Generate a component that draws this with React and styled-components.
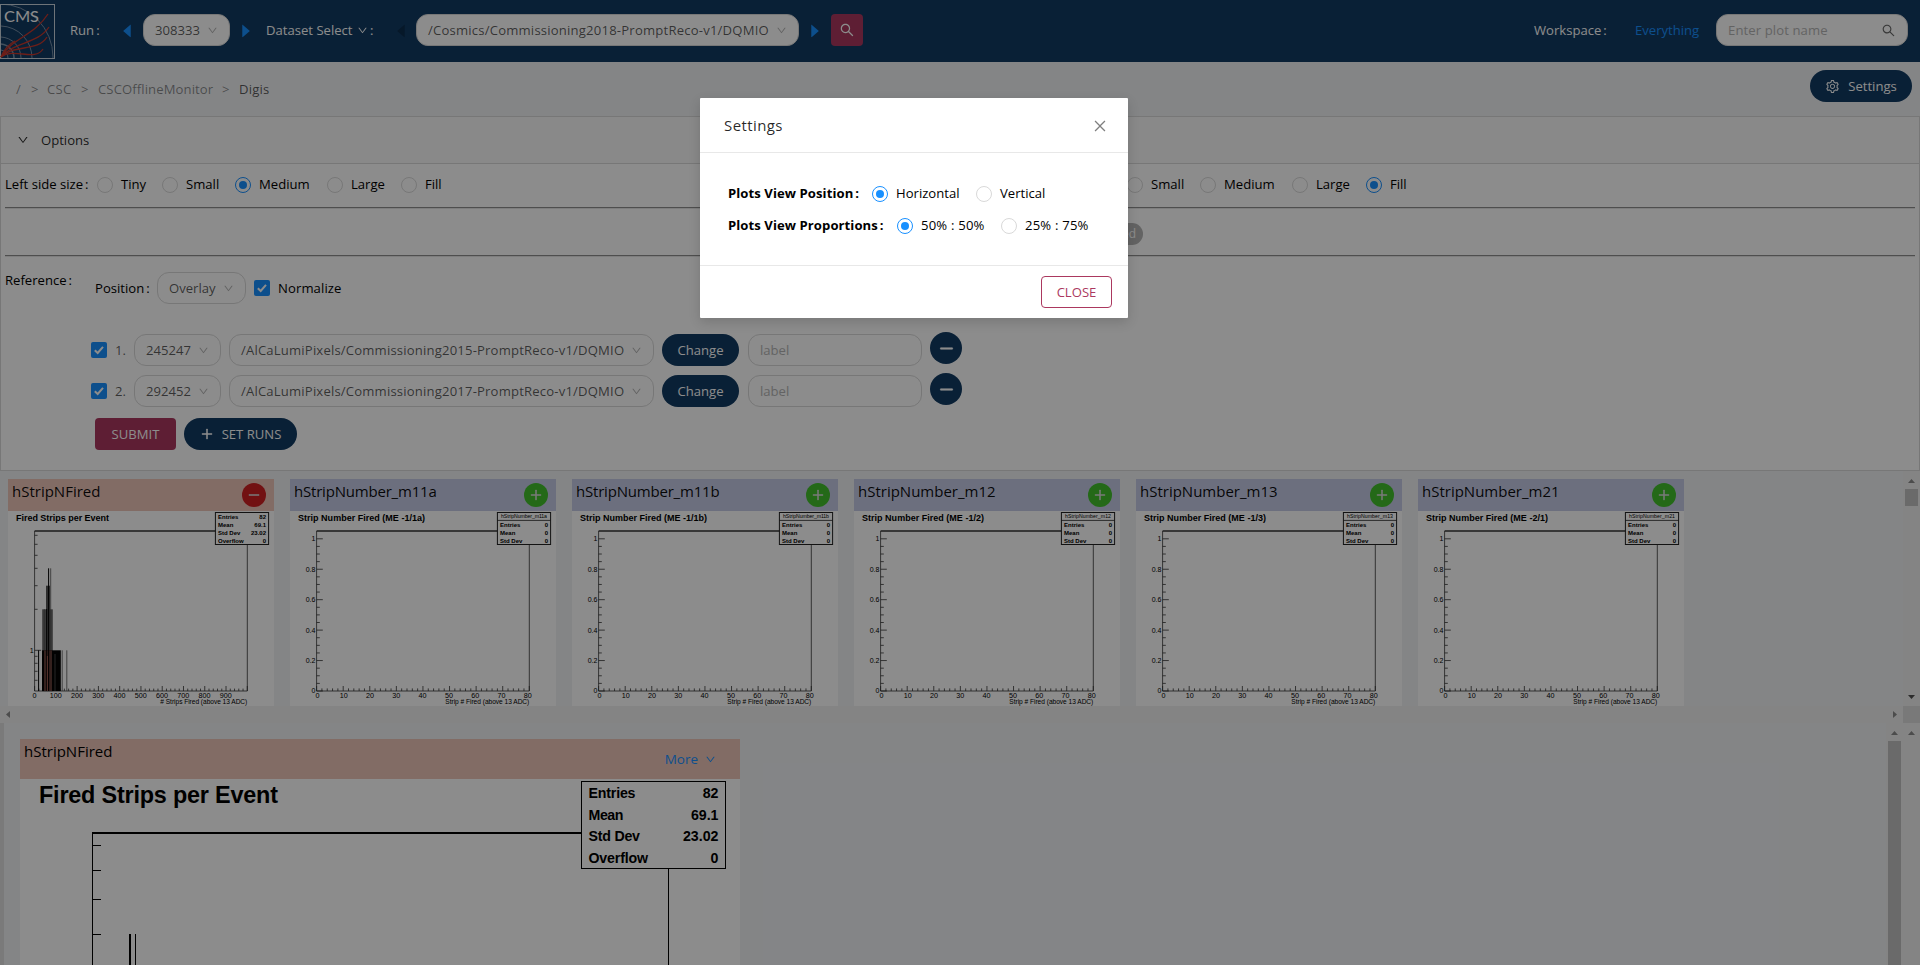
import React from "react";
import styled, { createGlobalStyle, css } from "styled-components";
import {
  AiOutlineSearch,
  AiOutlineSetting,
  AiOutlineDown,
  AiOutlineClose,
  AiOutlinePlus,
  AiOutlineMinus,
  AiFillCaretLeft,
  AiFillCaretRight,
} from "react-icons/ai";

const color = {
  primary: "#123b63",
  secondary: "#ab385f",
  link: "#1890ff",
  layout: "#f0f2f5",
  border: "#d9d9d9",
  selected: "#edc5b8",
  plain: "#c5cae5",
};

const GlobalStyle = createGlobalStyle`
  *, *::before, *::after { box-sizing: border-box; }
  html, body { margin: 0; height: 965px; overflow: hidden; }
  body {
    font-family: "Open Sans", "Noto Sans", sans-serif;
    font-size: 13.1px;
    line-height: 22px;
    color: #000;
    background: ${color.layout};
  }
  svg { display: block; flex: none; }
`;

/* ---------- shared parts ---------- */

const Page = styled.div`
  position: relative;
  display: flex;
  flex-direction: column;
  width: 1920px;
  height: 965px;
  overflow: hidden;
`;

const Text = styled.span`
  flex: none;
  width: ${(p) => (p.$w ? `${p.$w}px` : "auto")};
  padding-bottom: ${(p) => (p.$raised ? 2 : 0)}px;
  letter-spacing: ${(p) => p.$ls || 0}px;
  white-space: nowrap;
`;

const Colon = styled.span`
  margin-left: 2px;
  &::before { content: ":"; }
`;

const SelectBox = styled.div`
  flex: none;
  display: flex;
  align-items: center;
  justify-content: space-between;
  width: ${(p) => p.$w}px;
  height: 32px;
  padding: 0 11px;
  border: 1px solid ${color.border};
  border-radius: 12px;
  background: #fff;
  color: rgba(0, 0, 0, 0.65);
  letter-spacing: ${(p) => p.$ls || 0}px;
  white-space: nowrap;
  svg { color: rgba(0, 0, 0, 0.3); }
`;

const InputBox = styled(SelectBox)`
  color: #b5b5b5;
  svg { color: rgba(0, 0, 0, 0.6); }
`;

const Button = styled.div`
  flex: none;
  display: flex;
  align-items: center;
  justify-content: center;
  gap: 8px;
  width: ${(p) => p.$w}px;
  height: 32px;
  border-radius: ${(p) => (p.$square ? 4 : 16)}px;
  background: ${(p) => (p.$square ? color.secondary : color.primary)};
  color: #fff;
  ${(p) =>
    p.$outline &&
    css`
      background: #fff;
      border: 1px solid ${color.secondary};
      color: ${color.secondary};
    `}
`;

const Circle = styled.span`
  flex: none;
  display: grid;
  place-items: center;
  width: 16px;
  height: 16px;
  margin-right: 8px;
  border: 1px solid ${(p) => (p.$on ? color.link : color.border)};
  border-radius: 50%;
  background: #fff;
  &::after {
    content: "";
    width: 8px;
    height: 8px;
    border-radius: 50%;
    background: ${(p) => (p.$on ? color.link : "transparent")};
  }
`;

const RadioLabel = styled.label`
  flex: none;
  display: flex;
  align-items: center;
  width: ${(p) => p.$w}px;
  height: 22px;
  white-space: nowrap;
`;

const Radio = ({ w, on, ls, children }) => (
  <RadioLabel $w={w}>
    <Circle $on={on} />
    <Text $raised $ls={ls}>{children}</Text>
  </RadioLabel>
);

const Tick = styled.span`
  flex: none;
  display: grid;
  place-items: center;
  width: 16px;
  height: 16px;
  border-radius: 2px;
  background: ${color.link};
`;

const Checkbox = () => (
  <Tick>
    <svg width="12" height="12" viewBox="0 0 12 12">
      <path d="M1.8 6.2 L4.7 9 L10 2.8" fill="none" stroke="#fff" strokeWidth="2" />
    </svg>
  </Tick>
);

const Select = ({ w, ls, children }) => (
  <SelectBox $w={w} $ls={ls}>
    <span>{children}</span>
    <AiOutlineDown size={11} />
  </SelectBox>
);

/* ---------- header ---------- */

const Header = styled.header`
  flex: none;
  display: flex;
  align-items: center;
  height: 62px;
  padding: 0 12px 2px 0;
  background: ${color.primary};
  color: #fff;
`;

const Logo = styled.div`
  width: 55px;
  height: 55px;
  margin: 3px 15px 0 0;
`;

const Arrow = styled.span`
  flex: none;
  display: flex;
  justify-content: center;
  width: ${(p) => p.$w}px;
  padding-top: 2px;
  color: ${(p) => (p.$off ? "#0c2c4c" : color.link)};
`;

const Workspace = styled(Text)`
  color: ${color.link};
`;

const SelectTitle = styled.div`
  display: flex;
  align-items: center;
  width: 118px;
`;

const Spacer = styled.div`
  flex: 1;
`;

const CmsLogo = () => (
  <svg width="55" height="55" viewBox="0 0 55 55">
    <rect x="0.5" y="0.5" width="54" height="54" fill="none" stroke="#c9d3dd" />
    <g fill="none" stroke="#7890a8" strokeWidth="1">
      <circle cx="0" cy="53" r="53" clipPath="url(#logoClip)" />
      <path d="M1 22 A32 32 0 0 1 32 54" />
      <path d="M1 33 A21 21 0 0 1 21 54" />
      <path d="M1 40 A14 14 0 0 1 14 54" strokeWidth="1.6" />
      <path d="M1 46 A8 8 0 0 1 8 54" />
    </g>
    <clipPath id="logoClip">
      <rect x="1" y="1" width="53" height="53" />
    </clipPath>
    <g fill="none" stroke="#c8382c" strokeWidth="1.3">
      <path d="M1 53 C12 34 34 32 48 10" />
      <path d="M1 53 C13 38 38 40 49 23" />
      <path d="M1 53 C14 40 38 48 47 33" />
      <path d="M1 53 C14 43 35 58 43 45" />
      <path d="M1 53 C5 43 11 39 15 37" />
    </g>
    <text
      x="4"
      y="17.5"
      fill="#fff"
      fontFamily="Lato, sans-serif"
      fontSize="15.5"
      textLength="35"
      lengthAdjust="spacingAndGlyphs"
    >
      CMS
    </text>
  </svg>
);

/* ---------- breadcrumb ---------- */

const CrumbBar = styled.div`
  flex: none;
  display: flex;
  justify-content: space-between;
  height: 54px;
  padding: 8px 8px 0 16px;
`;

const Crumbs = styled.div`
  display: flex;
  height: 38px;
  align-items: center;
  color: rgba(0, 0, 0, 0.45);
`;

const CurrentCrumb = styled(Text)`
  color: rgba(0, 0, 0, 0.65);
`;

/* ---------- options ---------- */

const Options = styled.section`
  flex: none;
  height: 355px;
  border: 1px solid ${color.border};
  background: #fff;
`;

const OptionsHead = styled.div`
  display: flex;
  align-items: center;
  gap: 12px;
  height: 47px;
  padding-left: 16px;
  border-bottom: 1px solid ${color.border};
  background: #fafafa;
  color: rgba(0, 0, 0, 0.85);
`;

const OptionsBody = styled.div`
  display: flex;
  flex-direction: column;
  padding: 10px 4px 0;
`;

const SizeRow = styled.div`
  display: grid;
  grid-template-columns: 1122px 1fr;
  height: 33px;
`;

const SizeGroup = styled.div`
  display: flex;
  align-items: center;
  height: 22px;
`;

const Rule = styled.div`
  height: 2px;
  border-top: 1px solid #8e8e8e;
  border-bottom: 1px solid #e6e6e6;
`;

const StatusRow = styled.div`
  display: flex;
  justify-content: center;
  align-items: center;
  height: 46px;
  padding-top: 3px;
`;

const StatusTag = styled.span`
  display: flex;
  justify-content: flex-end;
  align-items: center;
  width: 366px;
  height: 22px;
  padding: 0 7px 0 0;
  border-radius: 11px;
  background: #b4b4b4;
  color: #fff;
  font-size: 12px;
`;

const Reference = styled.div`
  display: flex;
  padding-top: 15px;
`;

const RefLabel = styled.div`
  width: 86px;
  height: 16px;
  line-height: 16px;
`;

const RefForm = styled.div`
  display: flex;
  flex-direction: column;
`;

const PositionRow = styled.div`
  display: flex;
  align-items: center;
  height: 32px;
  margin: 0 0 30px 4px;
`;

const RunRow = styled.div`
  display: flex;
  align-items: center;
  height: 32px;
  margin-bottom: 9px;
`;

const RunIndex = styled.span`
  width: 27px;
  padding-left: 8px;
  color: rgba(0, 0, 0, 0.65);
`;

const Gap = styled.span`
  flex: none;
  width: ${(p) => p.$w}px;
`;

const RemoveRun = styled(Button)`
  margin-bottom: 4px;
`;

const FormActions = styled.div`
  display: flex;
  gap: 8px;
  margin: 2px 0 0 4px;
`;

/* ---------- plots ---------- */

const PlotsPane = styled.section`
  flex: none;
  display: grid;
  grid-template-columns: 1fr 17px;
  grid-template-rows: 235px 17px;
`;

const PlotList = styled.div`
  display: flex;
  gap: 16px;
  padding: 8px 8px 0;
`;

const Card = styled.article`
  flex: none;
  width: 266px;
  height: 227px;
  background: #fff;
`;

const CardHead = styled.div`
  display: flex;
  justify-content: space-between;
  align-items: center;
  height: 32px;
  padding: 0 8px 0 4px;
  background: ${(p) => (p.$on ? color.selected : color.plain)};
  font-size: 15px;
  color: rgba(0, 0, 0, 0.95);
  ${Text} { padding-bottom: 8px; }
`;

const RoundIcon = styled.span`
  display: grid;
  place-items: center;
  width: 24px;
  height: 24px;
  border-radius: 50%;
  background: ${(p) => (p.$on ? "#cf1f22" : "#42c02c")};
  color: #dcdcdc;
`;

const VBar = styled.div`
  display: flex;
  flex-direction: column;
  align-items: center;
  width: 17px;
  padding: 8px 0 ${(p) => (p.$flush ? 0 : 7)}px;
  background: #f1f1f1;
`;

const HBar = styled.div`
  display: flex;
  align-items: center;
  justify-content: space-between;
  padding: 0 6px;
  background: #f1f1f1;
`;

const Corner = styled.div`
  background: #dcdcdc;
`;

const Thumb = styled.div`
  flex: ${(p) => (p.$h ? "none" : 1)};
  width: 13px;
  height: ${(p) => (p.$h ? `${p.$h}px` : "auto")};
  margin-top: 6px;
  background: #c1c1c1;
`;

const DetailPane = styled.section`
  flex: 1;
  display: flex;
  min-height: 0;
`;

const LeftEdge = styled.div`
  width: 4px;
  background: #dedede;
`;

const DetailArea = styled.div`
  flex: 1;
  padding: 16px;
`;

const DetailCard = styled.article`
  width: 720px;
  height: 226px;
  background: #fff;
`;

const DetailHead = styled.div`
  display: flex;
  justify-content: space-between;
  height: 40px;
  padding: 1px 24px 0 4px;
  background: ${color.selected};
  font-size: 15px;
`;

const More = styled.span`
  display: flex;
  align-items: center;
  gap: 7px;
  height: 38px;
  color: ${color.link};
  font-size: 13.5px;
`;

const Triangle = ({ dir, fill = "#8b8b8b" }) => {
  const d = {
    up: "M0 4 L3.5 0 L7 4Z",
    down: "M0 0 L7 0 L3.5 4Z",
    left: "M4 0 L4 7 L0 3.5Z",
    right: "M0 0 L4 3.5 L0 7Z",
  }[dir];
  const vertical = dir === "up" || dir === "down";
  return (
    <svg width={vertical ? 7 : 4} height={vertical ? 4 : 7}>
      <path d={d} fill={fill} />
    </svg>
  );
};

const arial = '"Liberation Sans", Arial, sans-serif';
const X0 = 26.6;
const X1 = 239.3;
const YB = 180;

const StatRows = ({ rows, top }) =>
  rows.map(([name, value], i) => (
    <g key={name} fontWeight="700" fontSize="6">
      <text x="210" y={top + i * 8}>{name}</text>
      <text x="258" y={top + i * 8} textAnchor="end">{value}</text>
    </g>
  ));

const Frame = ({ title, titleWidth, children }) => (
  <svg width="266" height="195" viewBox="0 0 266 195" fontFamily={arial}>
    <text x="8" y="10" fontSize="9" fontWeight="700" textLength={titleWidth}>
      {title}
    </text>
    <g stroke="#333" fill="none">
      <path d={`M${X0} ${YB} V20`} strokeWidth="0.8" />
      <path d={`M${X1} 20 V${YB}`} strokeWidth="0.8" />
      <path d={`M${X0} 20 H${X1}`} strokeWidth="1.5" />
      <path d={`M${X0} ${YB} H${X1}`} strokeWidth="0.8" />
    </g>
    {children}
  </svg>
);

const StripNumberPlot = ({ name, title, titleWidth }) => {
  const xs = Array.from({ length: 41 }, (_, i) => i);
  const ys = Array.from({ length: 21 }, (_, i) => i);
  return (
    <Frame title={title} titleWidth={titleWidth}>
      <g stroke="#333" strokeWidth="0.8">
        {xs.map((i) => {
          const x = X0 + (i * (X1 - X0)) / 40;
          return <line key={i} x1={x} x2={x} y1={YB} y2={YB - (i % 5 ? 2.6 : 5)} />;
        })}
        {ys.map((i) => {
          const y = YB - i * 7.61;
          return <line key={i} x1={X0} x2={X0 + (i % 4 ? 3.2 : 6.2)} y1={y} y2={y} />;
        })}
      </g>
      <g fontSize="7.2" textAnchor="middle" fill="#000">
        {[0, 10, 20, 30, 40, 50, 60, 70, 80].map((v) => (
          <text key={v} x={X0 + 0.8 + v * 2.63} y="187">{v}</text>
        ))}
      </g>
      <g fontSize="7" textAnchor="end" fill="#000">
        {["0", "0.2", "0.4", "0.6", "0.8", "1"].map((v, i) => (
          <text key={v} x={X0 - 1.2} y={YB + 2.4 - i * 30.45}>{v}</text>
        ))}
        <text x={X1} y="193" fontSize="6.6" textLength="84">Strip # Fired (above 13 ADC)</text>
      </g>
      <rect x="207.4" y="1.5" width="53.2" height="32" fill="#fff" stroke="#222" />
      <line x1="207.4" x2="260.6" y1="9.4" y2="9.4" stroke="#222" strokeWidth="0.8" />
      <text x="257" y="7.1" fontSize="5.2" textAnchor="end" textLength="46">
        {name}
      </text>
      <StatRows top={15.8} rows={[["Entries", "0"], ["Mean", "0"], ["Std Dev", "0"]]} />
    </Frame>
  );
};

const FiredPlot = () => {
  const logTicks = [24.3, 33.3, 44.3, 57.3, 74.7, 98.3, 145.3, 152.3, 160.3, 169.3];
  const xs = Array.from({ length: 51 }, (_, i) => i);
  return (
    <Frame title="Fired Strips per Event" titleWidth="93">
      <g stroke="#333" strokeWidth="0.8">
        {logTicks.map((y) => (
          <line key={y} x1={X0} x2={X0 + 3} y1={y} y2={y} />
        ))}
        <line x1={X0} x2={X0 + 6.5} y1="139.3" y2="139.3" />
        {xs.map((i) => {
          const x = X0 + (i * (X1 - X0)) / 50;
          return <line key={i} x1={x} x2={x} y1={YB} y2={YB - (i % 5 ? 2.4 : 5)} />;
        })}
      </g>
      <rect x="34.2" y="98.3" width="10.6" height="82" fill="#696969" />
      <rect x="38" y="74.7" width="4" height="64.6" fill="#555" />
      <rect x="34" y="139.3" width="18.8" height="40.7" fill="#050505" />
      <rect x="36" y="139.3" width="8" height="40.7" fill="#613c38" />
      <g strokeWidth="1">
        <path d="M30.6 139.3 V180 M38.7 98 V180 M40.6 57.3 V180" stroke="#000" />
        <path d="M42.7 57.3 V139 M36.4 98.3 V139" stroke="#555" strokeWidth="0.8" />
        <path d="M54.2 139.3 V180 M58.8 139.3 V180" stroke="#555" strokeWidth="0.8" />
        <path d="M39.4 145 V180" stroke="#b86b60" strokeWidth="0.8" />
        <path d="M47 143 V180" stroke="#777" strokeWidth="0.6" />
      </g>
      <g fontSize="7.2" textAnchor="middle" fill="#000">
        <text x="23.8" y="141.7">1</text>
        {[0, 100, 200, 300, 400, 500, 600, 700, 800, 900].map((v) => (
          <text key={v} x={X0 + v * 0.2125} y="187">{v}</text>
        ))}
      </g>
      <text x={X1} y="193" fontSize="6.6" textAnchor="end" textLength="87">
        # Strips Fired (above 13 ADC)
      </text>
      <rect x="207.4" y="1.5" width="53.2" height="32" fill="#fff" stroke="#222" />
      <StatRows
        top={7.8}
        rows={[["Entries", "82"], ["Mean", "69.1"], ["Std Dev", "23.02"], ["Overflow", "0"]]}
      />
    </Frame>
  );
};

const DetailPlot = () => (
  <svg width="720" height="186" viewBox="0 0 720 186" fontFamily={arial} fontWeight="700">
    <text x="19" y="24" fontSize="23.4" textLength="239">Fired Strips per Event</text>
    <g stroke="#000" fill="none">
      <path d="M72.5 186 V53.5" />
      <path d="M72 54 H562" strokeWidth="2" />
      <path d="M648.5 90 V186" />
      <path d="M72 66.5 H81 M72 91.5 H81 M72 120.5 H81 M72 155.5 H81" />
      <path d="M110 155 V186" strokeWidth="2" />
      <path d="M115.5 155 V186" />
      <rect x="561.5" y="2.5" width="144" height="87" fill="#fff" />
    </g>
    <g fontSize="14.2">
      {[["Entries", "82", 47], ["Mean", "69.1", 35], ["Std Dev", "23.02", 51.5], ["Overflow", "0", 59.5]].map(
        ([name, value, length], i) => (
          <React.Fragment key={name}>
            <text x="568.5" y={19 + i * 21.6} textLength={length}>{name}</text>
            <text x="698.5" y={19 + i * 21.6} textAnchor="end">{value}</text>
          </React.Fragment>
        )
      )}
    </g>
  </svg>
);

const plots = [
  { name: "hStripNumber_m11a", title: "Strip Number Fired (ME -1/1a)", width: 127, ls: -0.2 },
  { name: "hStripNumber_m11b", title: "Strip Number Fired (ME -1/1b)", width: 127, ls: -0.2 },
  { name: "hStripNumber_m12", title: "Strip Number Fired (ME -1/2)", width: 122 },
  { name: "hStripNumber_m13", title: "Strip Number Fired (ME -1/3)", width: 122 },
  { name: "hStripNumber_m21", title: "Strip Number Fired (ME -2/1)", width: 122 },
];

/* ---------- settings dialog ---------- */

const Mask = styled.div`
  position: absolute;
  inset: 0;
  display: flex;
  justify-content: center;
  align-items: flex-start;
  padding: 98px 92px 0 0;
  background: rgba(0, 0, 0, 0.45);
`;

const Dialog = styled.div`
  width: 428px;
  height: 220px;
  background: #fff;
  border-radius: 1px;
  box-shadow: 0 4px 12px rgba(0, 0, 0, 0.15);
`;

const DialogHead = styled.div`
  display: flex;
  align-items: center;
  justify-content: space-between;
  height: 55px;
  padding: 0 20px 0 24px;
  border-bottom: 1px solid #e8e8e8;
  color: rgba(0, 0, 0, 0.85);
  font-size: 15px;
  font-weight: 500;
  letter-spacing: 0.4px;
  svg { margin-top: 2px; color: rgba(0, 0, 0, 0.5); }
`;

const DialogBody = styled.div`
  display: flex;
  flex-direction: column;
  gap: 10px;
  height: 112px;
  padding: 30px 28px 0;
`;

const SettingRow = styled.div`
  display: flex;
  align-items: center;
  height: 22px;
`;

const SettingName = styled.b`
  flex: none;
  width: ${(p) => p.$w}px;
  padding-bottom: 2px;
  letter-spacing: 0.07px;
  white-space: nowrap;
`;

const DialogFoot = styled.div`
  display: flex;
  justify-content: flex-end;
  height: 53px;
  padding: 10px 16px;
  border-top: 1px solid #e8e8e8;
`;

const references = [
  { run: "245247", dataset: "/AlCaLumiPixels/Commissioning2015-PromptReco-v1/DQMIO" },
  { run: "292452", dataset: "/AlCaLumiPixels/Commissioning2017-PromptReco-v1/DQMIO" },
];

const sizes = [["Tiny", 65], ["Small", 73], ["Medium", 92], ["Large", 74], ["Fill", 50]];

const SizeRadios = ({ options, selected }) =>
  options.map(([name, w]) => (
    <Radio key={name} w={w} on={name === selected}>
      {name}
    </Radio>
  ));

export default function App() {
  return (
    <Page>
      <GlobalStyle />
      <Header>
        <Logo>
          <CmsLogo />
        </Logo>
        <Text $w={42}>Run<Colon /></Text>
        <Arrow $w={30}><AiFillCaretLeft size={18} /></Arrow>
        <Gap $w={1} />
        <Select w={87}>308333</Select>
        <Arrow $w={31}><AiFillCaretRight size={18} /></Arrow>
        <Gap $w={5} />
        <SelectTitle>
          <Text $w={91}>Dataset Select</Text>
          <AiOutlineDown size={11} />
          <Text><Colon /></Text>
        </SelectTitle>
        <Gap $w={2} />
        <Arrow $w={30} $off><AiFillCaretLeft size={18} /></Arrow>
        <Select w={383} ls={0.2}>/Cosmics/Commissioning2018-PromptReco-v1/DQMIO</Select>
        <Arrow $w={32}><AiFillCaretRight size={18} /></Arrow>
        <Button $w={32} $square><AiOutlineSearch size={16} /></Button>
        <Spacer />
        <Text $w={101}>Workspace<Colon /></Text>
        <Workspace $w={81}>Everything</Workspace>
        <InputBox $w={192} $ls={0.1}>
          <span>Enter plot name</span>
          <AiOutlineSearch size={15} />
        </InputBox>
      </Header>

      <CrumbBar>
        <Crumbs>
          <Text $w={15}>/</Text>
          <Text $w={16}>&gt;</Text>
          <Text $w={34} $ls={0.3}>CSC</Text>
          <Text $w={17}>&gt;</Text>
          <Text $w={124} $ls={0.1}>CSCOfflineMonitor</Text>
          <Text $w={17}>&gt;</Text>
          <CurrentCrumb $ls={0.2}>Digis</CurrentCrumb>
        </Crumbs>
        <Button $w={102}>
          <AiOutlineSetting size={15} />
          Settings
        </Button>
      </CrumbBar>

      <Options>
        <OptionsHead>
          <AiOutlineDown size={12} />
          <Text>Options</Text>
        </OptionsHead>
        <OptionsBody>
          <SizeRow>
            <SizeGroup>
              <Text $w={92} $raised>Left side size<Colon /></Text>
              <SizeRadios options={sizes} selected="Medium" />
            </SizeGroup>
            <SizeGroup>
              <SizeRadios options={sizes.slice(1)} selected="Fill" />
            </SizeGroup>
          </SizeRow>
          <Rule />
          <StatusRow>
            <StatusTag>ed</StatusTag>
          </StatusRow>
          <Rule />
          <Reference>
            <RefLabel>Reference<Colon /></RefLabel>
            <RefForm>
              <PositionRow>
                <Text $w={62}>Position<Colon /></Text>
                <Select w={89}>Overlay</Select>
                <Gap $w={8} />
                <Checkbox />
                <Gap $w={8} />
                <Text $ls={0.1}>Normalize</Text>
              </PositionRow>
              {references.map((r, i) => (
                <RunRow key={r.run}>
                  <Checkbox />
                  <RunIndex>{i + 1}.</RunIndex>
                  <Select w={87}>{r.run}</Select>
                  <Gap $w={8} />
                  <Select w={425} ls={0.18}>{r.dataset}</Select>
                  <Gap $w={8} />
                  <Button $w={77}>Change</Button>
                  <Gap $w={9} />
                  <InputBox $w={174}>label</InputBox>
                  <Gap $w={8} />
                  <RemoveRun $w={32}>
                    <AiOutlineMinus size={17} strokeWidth={40} />
                  </RemoveRun>
                </RunRow>
              ))}
              <FormActions>
                <Button $w={81} $square>SUBMIT</Button>
                <Button $w={113}>
                  <AiOutlinePlus size={14} strokeWidth={40} />
                  SET RUNS
                </Button>
              </FormActions>
            </RefForm>
          </Reference>
        </OptionsBody>
      </Options>

      <PlotsPane>
        <PlotList>
          <Card>
            <CardHead $on>
              <Text>hStripNFired</Text>
              <RoundIcon $on><AiOutlineMinus size={14} strokeWidth={40} /></RoundIcon>
            </CardHead>
            <FiredPlot />
          </Card>
          {plots.map((p) => (
            <Card key={p.name}>
              <CardHead>
                <Text $ls={p.ls}>{p.name}</Text>
                <RoundIcon><AiOutlinePlus size={14} strokeWidth={40} /></RoundIcon>
              </CardHead>
              <StripNumberPlot name={p.name} title={p.title} titleWidth={p.width} />
            </Card>
          ))}
        </PlotList>
        <VBar>
          <Triangle dir="up" />
          <Thumb $h={17} />
          <Spacer />
          <Triangle dir="down" fill="#505050" />
        </VBar>
        <HBar>
          <Triangle dir="left" />
          <Triangle dir="right" />
        </HBar>
        <Corner />
      </PlotsPane>

      <DetailPane>
        <LeftEdge />
        <DetailArea>
          <DetailCard>
            <DetailHead>
              <Text>hStripNFired</Text>
              <More>
                More
                <AiOutlineDown size={11} />
              </More>
            </DetailHead>
            <DetailPlot />
          </DetailCard>
        </DetailArea>
        <VBar $flush>
          <Triangle dir="up" />
          <Thumb />
        </VBar>
        <VBar>
          <Triangle dir="up" />
        </VBar>
      </DetailPane>

      <Mask>
        <Dialog>
          <DialogHead>
            Settings
            <AiOutlineClose size={16} />
          </DialogHead>
          <DialogBody>
            <SettingRow>
              <SettingName $w={144}>Plots View Position<Colon /></SettingName>
              <Radio w={104} on>Horizontal</Radio>
              <Radio w={80}>Vertical</Radio>
            </SettingRow>
            <SettingRow>
              <SettingName $w={169}>Plots View Proportions<Colon /></SettingName>
              <Radio w={104} on ls={0.2}>50% : 50%</Radio>
              <Radio w={90} ls={0.2}>25% : 75%</Radio>
            </SettingRow>
          </DialogBody>
          <DialogFoot>
            <Button $w={71} $square $outline>CLOSE</Button>
          </DialogFoot>
        </Dialog>
      </Mask>
    </Page>
  );
}
